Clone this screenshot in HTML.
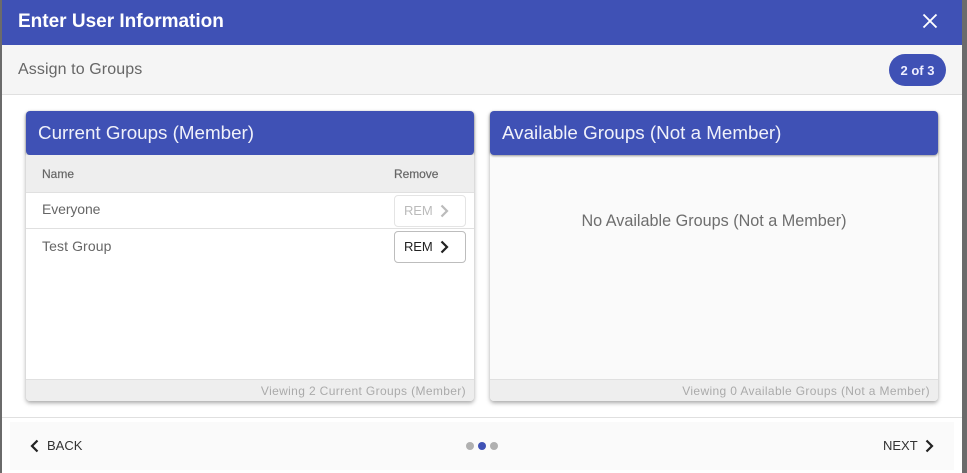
<!DOCTYPE html>
<html><head><meta charset="utf-8"><style>
html,body{margin:0;padding:0;width:967px;height:473px;overflow:hidden;background:#fff;font-family:"Liberation Sans",Arial,sans-serif}
div,span{position:absolute;white-space:nowrap;box-sizing:border-box}
svg{position:absolute}
.card{box-shadow:0 2px 4px rgba(0,0,0,.35);border-radius:4px}
.ch{background:#3f51b5;color:#f0f1fa;font-size:18.8px;border-radius:4px;height:44px;line-height:44px;padding-left:12px;box-shadow:0 1px 2px rgba(0,0,0,.4)}
.t{color:#666}
.ft{background:#eee;border-top:1px solid #e0e0e0;height:22px;font-size:12px;line-height:23px;color:#aaa;text-align:right;padding-right:8px;border-radius:0 0 4px 4px;letter-spacing:.36px}
.btn{width:72px;height:32px;border-radius:4px;background:#fff;font-size:13px;line-height:30px;padding-left:9px;letter-spacing:-.1px}
</style></head><body>
<div style="left:0;top:0;width:2px;height:473px;background:#6b6b6b"></div>
<div style="left:962px;top:0;width:5px;height:473px;background:#6b6b6b"></div>
<div style="left:2px;top:0;width:960px;height:45px;background:#3f51b5"></div>
<div style="left:18px;top:10px;font-size:19px;font-weight:bold;color:#fff;line-height:24px">Enter User Information</div>
<svg style="left:922px;top:13px" width="16" height="16" viewBox="0 0 16 16"><path d="M1.500 1.500L14.500 14.500M14.500 1.500L1.500 14.500" stroke="#fff" stroke-width="1.9" fill="none"/></svg>
<div style="left:2px;top:45px;width:960px;height:50px;background:#f5f5f5;border-bottom:1px solid #e0e0e0"></div>
<div class="t" style="left:18px;top:60px;font-size:16px;line-height:20px;letter-spacing:.1px">Assign to Groups</div>
<div style="left:889px;top:54px;width:57px;height:32px;border-radius:16px;background:#3f51b5;color:#eef;font-size:13px;font-weight:bold;text-align:center;line-height:33px">2 of 3</div>

<div class="card" style="left:26px;top:111px;width:448px;height:290px;background:#fff"></div>
<div class="ch" style="left:26px;top:111px;width:448px">Current Groups (Member)</div>
<div style="left:26px;top:155px;width:448px;height:38px;background:#eee;border-bottom:1px solid #e0e0e0"></div>
<div class="t" style="left:42px;top:166px;font-size:12px;font-weight:normal;line-height:16px;-webkit-text-stroke:.2px #666">Name</div>
<div class="t" style="left:394px;top:166px;font-size:12px;line-height:16px;letter-spacing:-.05px;-webkit-text-stroke:.2px #666">Remove</div>
<div class="t" style="left:42px;top:200px;font-size:14px;line-height:18px;letter-spacing:-.1px">Everyone</div>
<div style="left:26px;top:228px;width:448px;height:1px;background:#e0e0e0"></div>
<div class="t" style="left:42px;top:237px;font-size:14px;line-height:18px;letter-spacing:.1px">Test Group</div>
<div class="btn" style="left:394px;top:195px;border:1px solid #e4e4e4;color:#bbb">REM</div>
<svg style="left:438px;top:204px" width="13" height="14" viewBox="0 0 13 14"><path d="M2.500 1.500L8 7L2.500 12.500" stroke="#bbb" stroke-width="2.200" fill="none" transform="translate(1 0)"/></svg>
<div class="btn" style="left:394px;top:231px;border:1px solid #bdbdbd;color:#222">REM</div>
<svg style="left:438px;top:240px" width="13" height="14" viewBox="0 0 13 14"><path d="M2.500 1.500L8 7L2.500 12.500" stroke="#222" stroke-width="2.200" fill="none" transform="translate(1 0)"/></svg>
<div class="ft" style="left:26px;top:379px;width:448px">Viewing 2 Current Groups (Member)</div>

<div class="card" style="left:490px;top:111px;width:448px;height:290px;background:#fafafa"></div>
<div class="ch" style="left:490px;top:111px;width:448px">Available Groups (Not a Member)</div>
<div class="t" style="left:490px;top:211px;width:448px;text-align:center;font-size:16.2px;line-height:20px;color:#6e6e6e">No Available Groups (Not a Member)</div>
<div class="ft" style="left:490px;top:379px;width:448px">Viewing 0 Available Groups (Not a Member)</div>

<div style="left:2px;top:417px;width:960px;height:1px;background:#e0e0e0"></div>
<div style="left:10px;top:422px;width:944px;height:48px;background:#fafafa"></div>
<svg style="left:29px;top:439px" width="12" height="14" viewBox="0 0 12 14"><path d="M8.500 1.500L3 7L8.500 12.500" stroke="#222" stroke-width="2.200" fill="none"/></svg>
<div style="left:47px;top:437px;font-size:13px;line-height:18px;color:#333;letter-spacing:0">BACK</div>
<div style="left:466px;top:442px;width:8px;height:8px;border-radius:50%;background:#b0b0b0"></div>
<div style="left:478px;top:442px;width:8px;height:8px;border-radius:50%;background:#3f51b5"></div>
<div style="left:490px;top:442px;width:8px;height:8px;border-radius:50%;background:#b0b0b0"></div>
<div style="left:883px;top:437px;font-size:13px;line-height:18px;color:#333;letter-spacing:0">NEXT</div>
<svg style="left:924px;top:439px" width="12" height="14" viewBox="0 0 12 14"><path d="M2.500 1.500L8 7L2.500 12.500" stroke="#222" stroke-width="2.200" fill="none"/></svg>
</body></html>
